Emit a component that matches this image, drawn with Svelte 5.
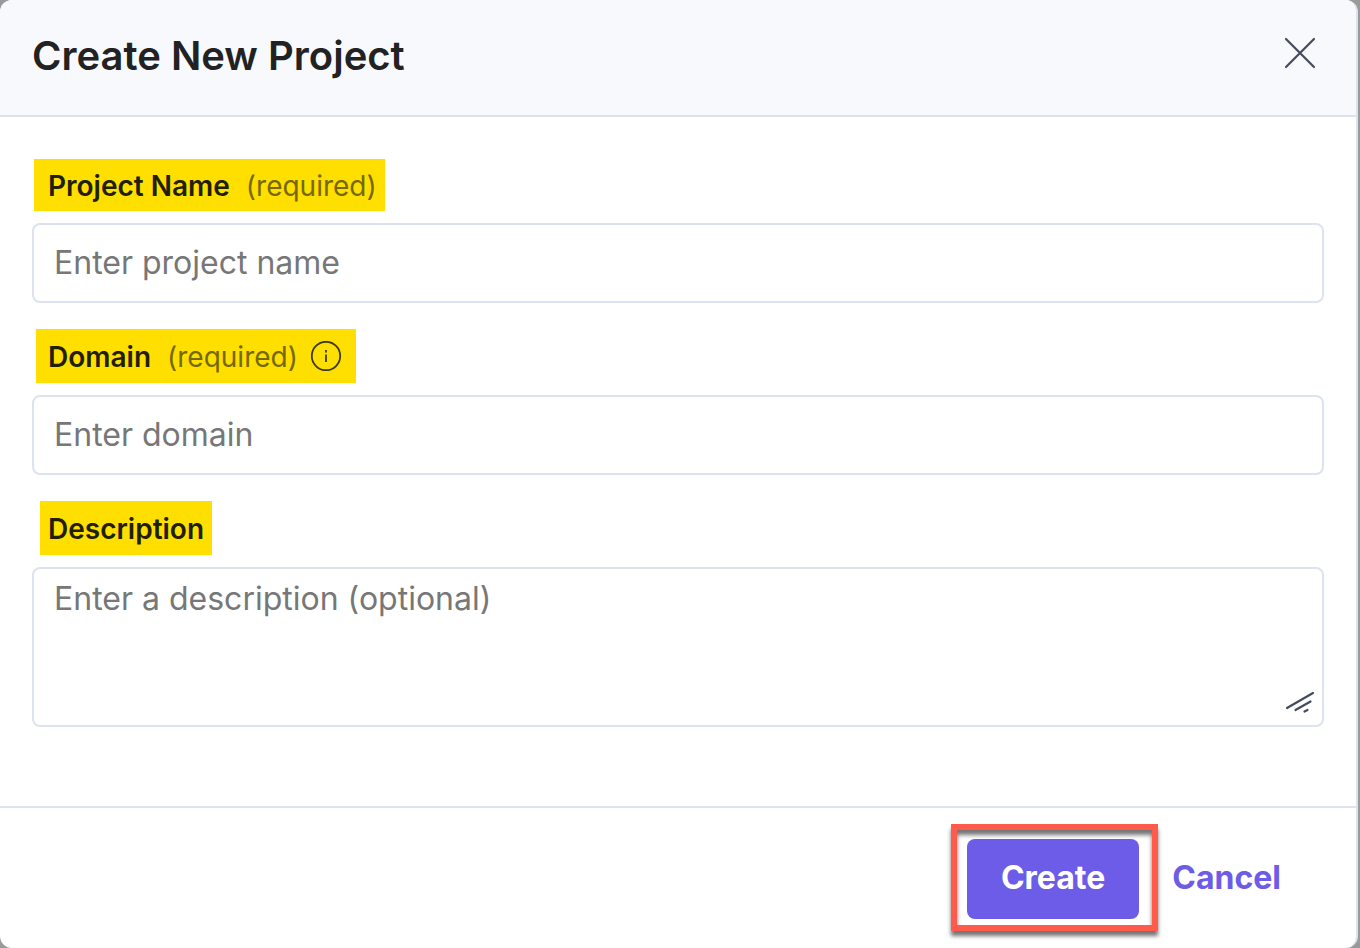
<script>
	let name = $state('');
	let domain = $state('');
	let description = $state('');
</script>

<form class="modal" aria-labelledby="modal-title" onsubmit={(e) => e.preventDefault()}>
	<header class="header">
		<h1 id="modal-title">Create New Project</h1>
		<button type="button" class="close" aria-label="Close">
			<svg viewBox="0 0 32 32" width="32" height="32" aria-hidden="true">
				<path d="M2 2L30 30M30 2L2 30" />
			</svg>
		</button>
	</header>

	<div class="body">
		<div class="field">
			<label class="label name" for="name">
				Project Name <span class="required">(required)</span>
			</label>
			<input id="name" type="text" placeholder="Enter project name" bind:value={name} />
		</div>

		<div class="field">
			<label class="label domain" for="domain">
				Domain <span class="required">(required)</span>
				<svg class="info" viewBox="0 0 32 32" width="32" height="32" aria-hidden="true">
					<circle cx="16" cy="15" r="14.2" />
					<path d="M16 13.4V21M16 9V11.4" />
				</svg>
			</label>
			<input id="domain" type="text" placeholder="Enter domain" bind:value={domain} />
		</div>

		<div class="field">
			<label class="label description" for="description">Description</label>
			<div class="textarea">
				<textarea id="description" placeholder="Enter a description (optional)" bind:value={description}></textarea>
				<svg class="grip" viewBox="0 0 30 22" width="30" height="22" aria-hidden="true">
					<path d="M2 17L28 2M10.500 19L25.500 10.500M19.500 20.500L22.500 19" />
				</svg>
			</div>
		</div>
	</div>

	<footer class="footer">
		<div class="highlight">
			<button type="submit" class="create">Create</button>
		</div>
		<button type="button" class="cancel">Cancel</button>
	</footer>
</form>

<style>
	:global(body) {
		margin: 0;
		background: #999b9b;
	}

	.modal {
		box-sizing: border-box;
		min-height: 100vh;
		margin-right: 2px;
		display: flex;
		flex-direction: column;
		border-right: 2px solid #dce2ee;
		border-radius: 12px;
		background: #fff;
		color: #222;
		font-family: Inter, sans-serif;
		overflow: hidden;
	}

	.header {
		display: flex;
		align-items: center;
		justify-content: space-between;
		padding: 32px 40px 35px 32px;
		border-bottom: 2px solid #dce2ee;
		background: #f8f9fd;
	}

	h1 {
		margin: 0;
		font-size: 40px;
		line-height: 48px;
		font-weight: 600;
	}

	button {
		padding: 0;
		border: 0;
		background: none;
		font: inherit;
		cursor: pointer;
	}

	svg {
		display: block;
		fill: none;
		stroke: #434c5e;
		stroke-width: 2.2;
		stroke-linecap: round;
	}

	.close {
		margin-bottom: 6px;
	}

	.body {
		flex: 1;
		display: flex;
		flex-direction: column;
		gap: 26px;
		padding: 42px 32px 40px;
	}

	.field {
		display: flex;
		flex-direction: column;
		align-items: flex-start;
		gap: 12px;
	}

	.label {
		box-sizing: border-box;
		height: 54px;
		display: flex;
		align-items: center;
		background: #ffdf00;
		color: #221e00;
		font-size: 28px;
		font-weight: 600;
	}

	/* highlight boxes vary in width, their text shares one left edge */
	.name {
		height: 52px;
		margin-left: 2px;
		padding: 2px 8px 0 14px;
	}

	.domain {
		margin-left: 4px;
		padding: 2px 14px 0 12px;
	}

	.description {
		margin-left: 8px;
		padding: 2px 8px 0;
	}

	.required {
		margin-left: 16px;
		color: #766800;
		font-weight: 400;
	}

	.info {
		margin-left: 12px;
		stroke: #3c3b0d;
		stroke-width: 1.8;
		stroke-linecap: butt;
	}

	input,
	textarea {
		box-sizing: border-box;
		width: 100%;
		margin: 0;
		border: 2px solid #dce2ee;
		border-radius: 8px;
		background: #fff;
		color: #222;
		font-family: inherit;
		font-size: 32px;
		line-height: 40px;
		outline: none;
	}

	input {
		height: 80px;
		padding: 0 20px 2px;
	}

	textarea {
		display: block;
		height: 160px;
		padding: 10px 20px;
		resize: none;
	}

	input::placeholder,
	textarea::placeholder {
		color: #777;
		opacity: 1;
	}

	.textarea {
		position: relative;
		width: 100%;
	}

	.grip {
		position: absolute;
		right: 9px;
		bottom: 14px;
		pointer-events: none;
	}

	.footer {
		display: flex;
		align-items: center;
		justify-content: flex-end;
		gap: 14px;
		padding: 16px 75px 17px;
		border-top: 2px solid #dce2ee;
		font-size: 32px;
		font-weight: 700;
	}

	.highlight {
		padding: 9px 13px 6px 10px;
		border: 6px solid #ff5a4b;
		box-shadow:
			0 5px 4px rgba(0, 0, 0, 0.55),
			inset 0 5px 4px rgba(0, 0, 0, 0.55);
	}

	.create {
		display: block;
		height: 80px;
		padding: 0 34px 4px;
		border-radius: 8px;
		background: #6c5ce7;
		color: #fff;
	}

	.cancel {
		color: #6c5ce7;
	}
</style>
